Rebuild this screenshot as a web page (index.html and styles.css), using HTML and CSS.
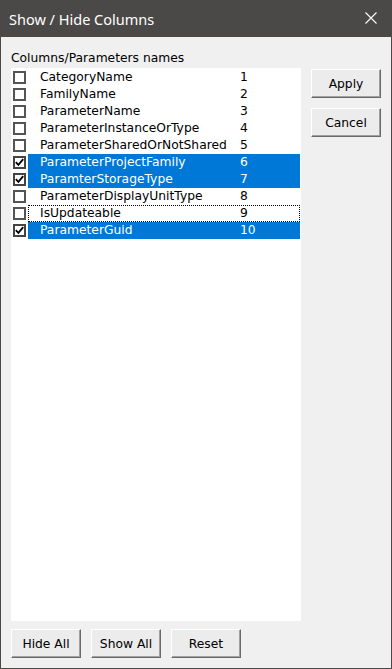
FILE: index.html
```html
<!DOCTYPE html>
<html lang="en">

<head>
    <meta charset="UTF-8" />
    <meta name="viewport" content="width=device-width, initial-scale=1.0" />
    <title>Show / Hide Columns</title>
    <link rel="stylesheet" href="styles.css">
</head>

<body>
    <div class="window">
        <div class="titlebar">
            <span class="title">Show / Hide Columns</span>
            <svg class="close" width="12" height="12" viewBox="0 0 12 12">
                <path d="M0.5 0.5 L11.5 11.5 M11.5 0.5 L0.5 11.5" stroke="#fff" stroke-width="1.1" fill="none" />
            </svg>
        </div>

        <div class="content">
            <div class="label">Columns/Parameters names</div>
            <div class="middle">
                <div class="list">
                    <div class="row"><span class="check"></span><span class="cell"><span class="name">CategoryName</span><span class="num">1</span></span></div>
                    <div class="row"><span class="check"></span><span class="cell"><span class="name">FamilyName</span><span class="num">2</span></span></div>
                    <div class="row"><span class="check"></span><span class="cell"><span class="name">ParameterName</span><span class="num">3</span></span></div>
                    <div class="row"><span class="check"></span><span class="cell"><span class="name">ParameterInstanceOrType</span><span class="num">4</span></span></div>
                    <div class="row"><span class="check"></span><span class="cell"><span class="name">ParameterSharedOrNotShared</span><span class="num">5</span></span></div>
                    <div class="row"><span class="check checked"><svg width="9" height="9" viewBox="0 0 9 9"><path d="M0.8 4.2 L3.4 6.9 L8.2 1.2" stroke="#000" stroke-width="1.8" fill="none" /></svg></span><span class="cell selected"><span class="name">ParameterProjectFamily</span><span class="num">6</span></span></div>
                    <div class="row"><span class="check checked"><svg width="9" height="9" viewBox="0 0 9 9"><path d="M0.8 4.2 L3.4 6.9 L8.2 1.2" stroke="#000" stroke-width="1.8" fill="none" /></svg></span><span class="cell selected"><span class="name">ParamterStorageType</span><span class="num">7</span></span></div>
                    <div class="row"><span class="check"></span><span class="cell"><span class="name">ParameterDisplayUnitType</span><span class="num">8</span></span></div>
                    <div class="row"><span class="check"></span><span class="cell focused"><span class="name">IsUpdateable</span><span class="num">9</span></span></div>
                    <div class="row"><span class="check checked"><svg width="9" height="9" viewBox="0 0 9 9"><path d="M0.8 4.2 L3.4 6.9 L8.2 1.2" stroke="#000" stroke-width="1.8" fill="none" /></svg></span><span class="cell selected"><span class="name">ParameterGuid</span><span class="num">10</span></span></div>
                </div>
                <div class="side">
                    <button class="btn">Apply</button>
                    <button class="btn">Cancel</button>
                </div>
            </div>
            <div class="bottom">
                <button class="btn">Hide All</button>
                <button class="btn">Show All</button>
                <button class="btn">Reset</button>
            </div>
        </div>
    </div>
</body>

</html>
```

FILE: styles.css
```css
html,
body {
    margin: 0;
    padding: 0;
    background: #f0f0f0;
}

.window {
    width: 392px;
    height: 669px;
    box-sizing: border-box;
    border: 1px solid #4b4947;
    border-top: none;
    background: #f0f0f0;
    display: flex;
    flex-direction: column;
    font-family: "DejaVu Sans", sans-serif;
    font-size: 12.3px;
    color: #000;
}

.titlebar {
    height: 37px;
    flex: none;
    background: #4b4947;
    display: flex;
    align-items: center;
    justify-content: space-between;
    padding: 0 15px 0 9px;
    margin: 0 -1px;
}

.title {
    font-family: "Noto Sans", sans-serif;
    font-size: 14.5px;
    color: #fff;
    margin-top: 1px;
}

.close {
    display: block;
    margin-top: -1px;
}

.content {
    flex: 1;
    display: flex;
    flex-direction: column;
    padding: 14px 10px 10px 10px;
}

.label {
    line-height: 14px;
    height: 14px;
    margin-bottom: 3px;
}

.middle {
    flex: 1;
    display: flex;
    gap: 10px;
}

.list {
    width: 290px;
    background: #fff;
    padding-top: 1px;
}

.row {
    display: flex;
    height: 17px;
    line-height: 17px;
}

.check {
    flex: none;
    width: 13px;
    height: 13px;
    box-sizing: border-box;
    border: 2px solid #555;
    background: #fff;
    margin: 2px 0 0 2px;
    display: flex;
    align-items: center;
    justify-content: center;
}

.check.checked {
    border-color: #444;
}

.check svg {
    display: block;
}

.cell {
    flex: 1;
    display: flex;
    margin-left: 2px;
    margin-right: 1px;
    white-space: nowrap;
}

.cell.selected {
    background: #0078d7;
    color: #fff;
}

.cell.focused {
    outline: 1px dotted #000;
    outline-offset: -1px;
}

.name {
    width: 200px;
    padding-left: 12px;
    overflow: hidden;
}

.num {
    flex: 1;
}

.side {
    display: flex;
    flex-direction: column;
    gap: 10px;
    padding-top: 1px;
}

.btn {
    width: 70px;
    height: 29px;
    box-sizing: border-box;
    padding: 0;
    font-family: "DejaVu Sans", sans-serif;
    font-size: 12.3px;
    color: #000;
    background: #ececec;
    border: 1px solid;
    border-color: #fff #6a6a6a #6a6a6a #fff;
    box-shadow: inset -1px -1px #a0a0a0;
}

.bottom {
    display: flex;
    gap: 10px;
    margin-top: 8px;
}
```
